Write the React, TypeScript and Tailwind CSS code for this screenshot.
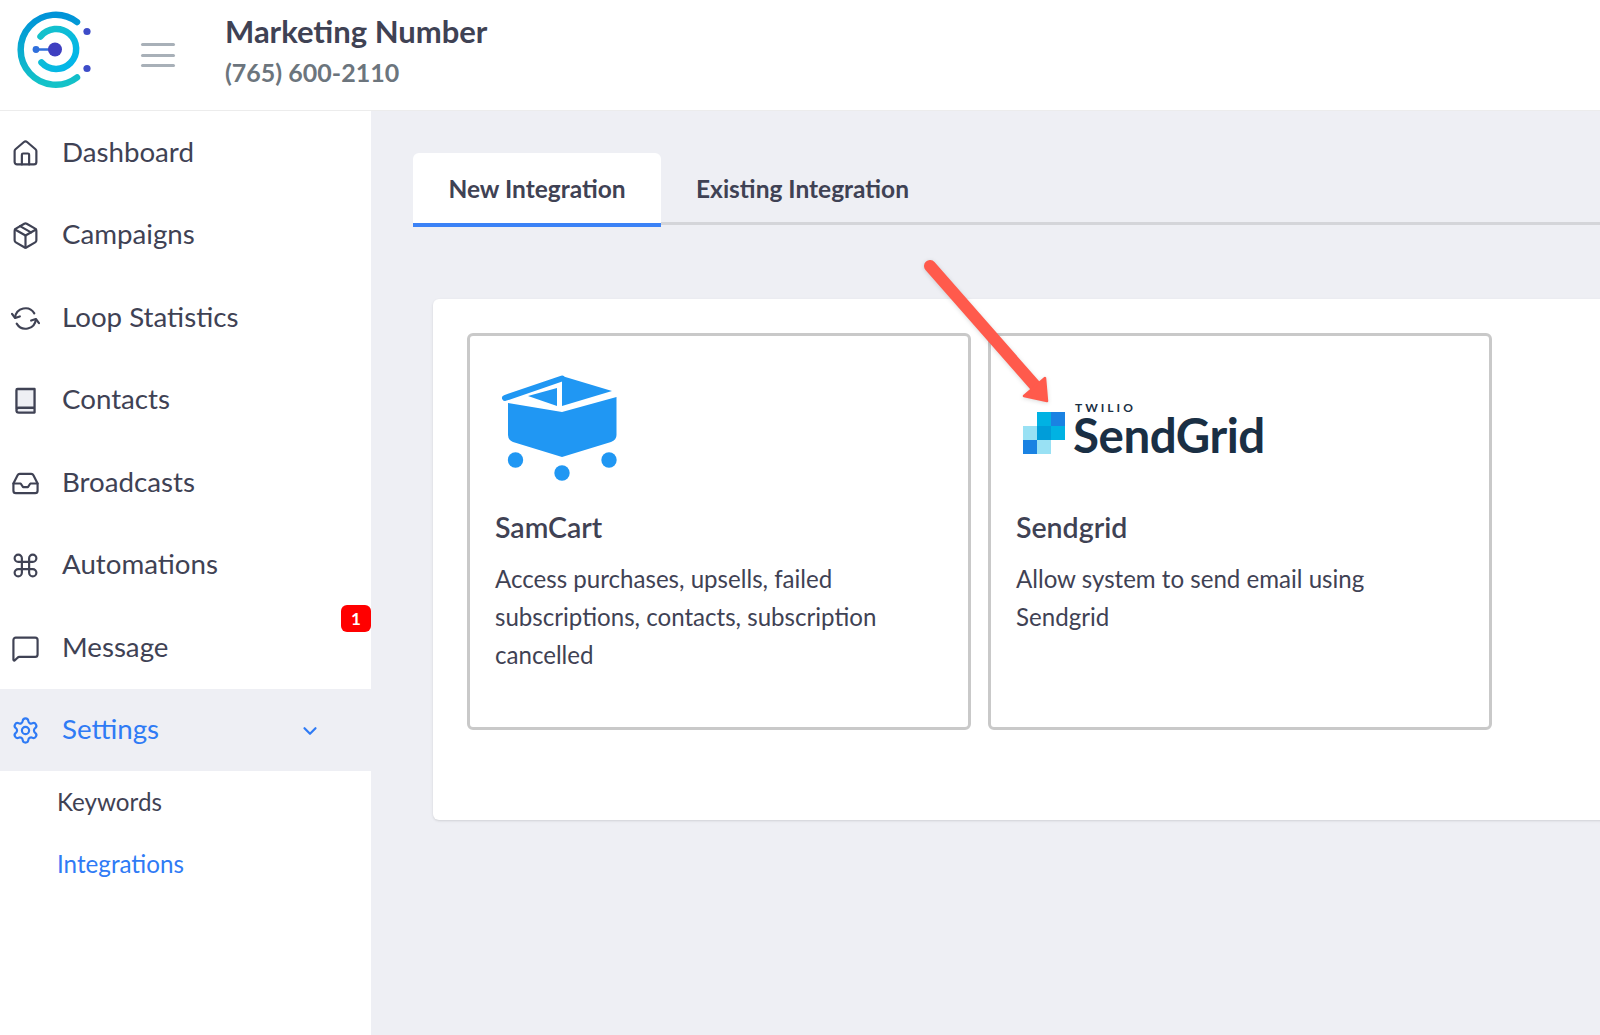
import { House, Package, Inbox, Command, MessageSquare, Settings, ChevronDown } from "lucide-react";
import type { ReactNode } from "react";

function Logo() {
  return (
    <svg width="100" height="100" viewBox="3 5.5 100 100" fill="none" className="shrink-0">
      <defs>
        <linearGradient id="outer" x1="0" y1="0" x2="0" y2="1">
          <stop offset="0" stopColor="#0093d8" />
          <stop offset="1" stopColor="#14c3c8" />
        </linearGradient>
        <linearGradient id="inner" x1="0" y1="0" x2="1" y2="1">
          <stop offset="0" stopColor="#16c2c8" />
          <stop offset="1" stopColor="#00b4ee" />
        </linearGradient>
      </defs>
      <path d="M77 22.5 A 35 35 0 1 0 77 78" stroke="url(#outer)" strokeWidth="6.5" strokeLinecap="round" />
      <path d="M40.5 37 A 20 20 0 1 1 41.5 63" stroke="url(#inner)" strokeWidth="6.5" strokeLinecap="round" />
      <path d="M36 50 H50" stroke="#2f6fdc" strokeWidth="2.5" />
      <circle cx="36" cy="50" r="3.4" fill="#2f6fdc" />
      <circle cx="55" cy="50" r="7" fill="#3f3fc0" />
      <circle cx="87" cy="32" r="3.6" fill="#3d4cc8" />
      <circle cx="87" cy="69" r="3.6" fill="#3d4cc8" />
    </svg>
  );
}

function LoopIcon({ className }: { className?: string }) {
  return (
    <svg viewBox="0 0 28 28" fill="none" stroke="currentColor" strokeWidth="2.1" strokeLinecap="round" strokeLinejoin="round" className={className}>
      <path d="M4 13 A 10 10 0 0 1 22.5 9" />
      <path d="M24 15 A 10 10 0 0 1 5.5 19" />
      <path d="M1 9.5 L4 13.5 L8.5 12" />
      <path d="M27 18.5 L24 14.5 L19.5 16" />
    </svg>
  );
}

function BookIcon({ className }: { className?: string }) {
  return (
    <svg viewBox="0 0 24 24" fill="none" stroke="currentColor" strokeWidth="1.9" strokeLinecap="round" strokeLinejoin="round" className={className}>
      <path d="M4.5 19V3.5a1 1 0 0 1 1-1h14v19.5H6.5a2 2 0 0 1-2-2 2 2 0 0 1 2-2h13" fill="#eeeff4" />
    </svg>
  );
}

function NavRow({ icon, label, active, children }: { icon: ReactNode; label: string; active?: boolean; children?: ReactNode }) {
  return (
    <div className={`relative flex h-[82.5px] shrink-0 items-center pl-[11px] pt-[2px] ${active ? "bg-[#eeeff4] text-[#2f7bf5]" : "text-[#3f4254]"}`}>
      <span className="flex w-[51px] shrink-0 items-center">{icon}</span>
      <span className="pb-[3px] text-[27.7px] leading-none">{label}</span>
      {children}
    </div>
  );
}

function SamCartLogo() {
  return (
    <svg width="130" height="115" viewBox="25 30 130 115" className="block">
      <path d="M35 58 L92 38.5" stroke="#2097f3" strokeWidth="6" strokeLinecap="round" fill="none" />
      <path d="M92 36 L142 51 L92 66 Z" fill="#2097f3" />
      <path d="M58 56 L87 48 V66 Z" fill="#2097f3" />
      <path d="M38 63 L92 72 L146.5 57 V95 Q146.5 100 141 102 L92 117 L43 102 Q38 100 38 95 Z" fill="#2097f3" />
      <circle cx="45.5" cy="120" r="7.7" fill="#2097f3" />
      <circle cx="92" cy="133" r="7.7" fill="#2097f3" />
      <circle cx="139" cy="120" r="7.7" fill="#2097f3" />
    </svg>
  );
}

function SendGridLogo() {
  const cell = "h-[14px] w-[14px]";
  return (
    <div className="flex h-[115px] items-start pl-[7px] pt-[32px]">
      <div className="mt-[10px] grid grid-cols-3">
        <div className={cell} />
        <div className={`${cell} bg-[#00b2e3]`} />
        <div className={`${cell} bg-[#1a82e2]`} />
        <div className={`${cell} bg-[#99e1f4]`} />
        <div className={`${cell} bg-[#009dd9]`} />
        <div className={`${cell} bg-[#00b2e3]`} />
        <div className={`${cell} bg-[#1a82e2]`} />
        <div className={`${cell} bg-[#99e1f4]`} />
      </div>
      <div className="ml-[8px] flex flex-col text-[#1a2f44]">
        <span className="pl-[2px] text-[12px] font-bold leading-[12px] tracking-[0.25em]">TWILIO</span>
        <span className="text-[47.5px] font-bold leading-[42px] tracking-[-0.01em]">SendGrid</span>
      </div>
    </div>
  );
}

function Card({ logo, title, lines }: { logo: ReactNode; title: string; lines: string[] }) {
  return (
    <div className="flex h-[397px] w-[504px] shrink-0 flex-col rounded-[6px] border-[3px] border-[#c9c9c9] px-[25px] pt-[34px]">
      {logo}
      <div className="mt-[22px] text-[28.5px] font-semibold leading-[40px] text-[#3f4254]">{title}</div>
      <div className="mt-[13px] text-[24.1px] leading-[38px] text-[#3f4254]">
        {lines.map((l) => (
          <div key={l}>{l}</div>
        ))}
      </div>
    </div>
  );
}

export default function App() {
  const ic = "h-[29px] w-[29px]";
  return (
    <div className="flex h-[1035px] w-[1600px] flex-col overflow-hidden bg-white font-['Lato','Noto_Sans',sans-serif]">
      <header className="flex h-[111px] shrink-0 items-center border-b border-[#ececec] bg-white">
        <div className="flex items-center pl-[3px]">
          <Logo />
          <div className="ml-[38px] flex w-[34px] flex-col gap-[7.5px]">
            <div className="h-[3px] rounded-full bg-[#a8b0b8]" />
            <div className="h-[3px] rounded-full bg-[#a8b0b8]" />
            <div className="h-[3px] rounded-full bg-[#a8b0b8]" />
          </div>
        </div>
        <div className="ml-[50px] flex flex-col pb-[8px]">
          <div className="text-[31px] font-bold leading-[40px] text-[#3f4254]">Marketing Number</div>
          <div className="mt-[1px] text-[25px] font-bold leading-[40px] text-[#6c757d]">(765) 600-2110</div>
        </div>
      </header>
      <div className="flex min-h-0 flex-1">
        <aside className="flex w-[371px] shrink-0 flex-col bg-white">
          <NavRow label="Dashboard" icon={<House className={ic} strokeWidth={1.8} />} />
          <NavRow label="Campaigns" icon={<Package className={ic} strokeWidth={1.8} />} />
          <NavRow label="Loop Statistics" icon={<LoopIcon className={ic} />} />
          <NavRow label="Contacts" icon={<BookIcon className={ic} />} />
          <NavRow label="Broadcasts" icon={<Inbox className={ic} strokeWidth={1.8} />} />
          <NavRow label="Automations" icon={<Command className={ic} strokeWidth={1.8} />} />
          <NavRow label="Message" icon={<MessageSquare className={ic} strokeWidth={1.8} />}>
            <span className="absolute right-0 top-[-1px] flex h-[27px] w-[30px] items-center justify-center rounded-[6px] bg-[#ff0000] text-[17px] font-bold text-white">1</span>
          </NavRow>
          <NavRow label="Settings" active icon={<Settings className={ic} strokeWidth={1.8} />}>
            <ChevronDown className="absolute left-[299px] h-[22px] w-[22px]" strokeWidth={2.4} />
          </NavRow>
          <div className="flex h-[62px] items-center pl-[57px] text-[24.2px] text-[#3f4254]">Keywords</div>
          <div className="flex h-[62px] items-center pl-[57px] text-[24.2px] text-[#2f7bf5]">Integrations</div>
        </aside>
        <main className="relative min-w-0 flex-1 overflow-hidden bg-[#eeeff4] pl-[42px] pt-[42px]">
          <div className="flex h-[72px] items-stretch border-b-[3px] border-[#d4d5d9]">
            <div className="-mb-[5px] flex w-[248px] items-center justify-center rounded-t-[6px] border-b-[4px] border-[#3b82f6] bg-white pt-[3px] text-[24.5px] font-bold text-[#3f4254]">New Integration</div>
            <div className="flex items-center pl-[35px] pt-[4px] text-[24.5px] font-bold text-[#3f4254]">Existing Integration</div>
          </div>
          <div className="ml-[20px] mt-[74px] flex h-[521px] w-[1300px] gap-[17px] rounded-[6px] bg-white pl-[34px] pt-[34px] shadow-sm">
            <Card
              logo={<SamCartLogo />}
              title="SamCart"
              lines={["Access purchases, upsells, failed", "subscriptions, contacts, subscription", "cancelled"]}
            />
            <Card logo={<SendGridLogo />} title="Sendgrid" lines={["Allow system to send email using", "Sendgrid"]} />
          </div>
          <svg className="absolute left-[549px] top-[144px] drop-shadow-sm" width="150" height="160" viewBox="920 255 150 160" fill="none">
            <path d="M930 266 L1038 389" stroke="#ff5a4c" strokeWidth="12" strokeLinecap="round" />
            <path d="M1045 378 L1047 401 L1024 396 Z" fill="#ff5a4c" stroke="#ff5a4c" strokeWidth="2.5" strokeLinejoin="round" />
          </svg>
        </main>
      </div>
    </div>
  );
}
